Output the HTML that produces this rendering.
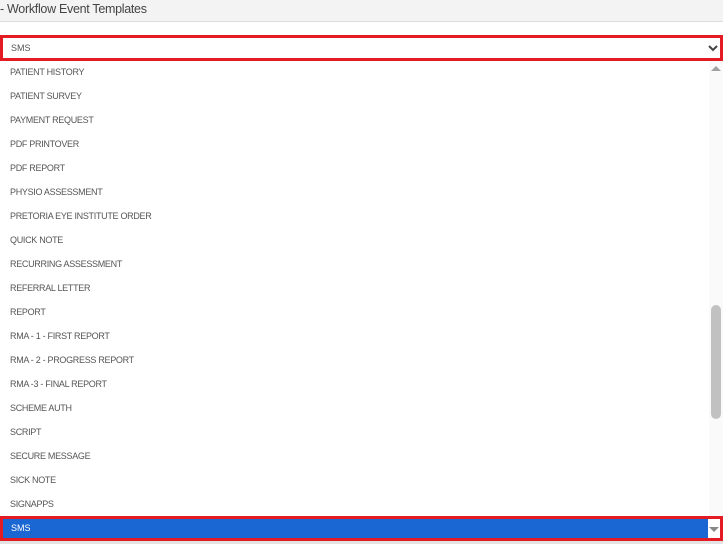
<!DOCTYPE html>
<html><head><style>
*{margin:0;padding:0;box-sizing:border-box}
body{width:723px;height:544px;overflow:hidden;background:#fff;font-family:"Liberation Sans",sans-serif;position:relative}
.hdr{position:absolute;left:0;top:0;width:723px;height:22px;background:#f3f3f3;border-bottom:1px solid #ddd;font-size:12.5px;color:#444;padding:1px 0 0 0;line-height:16px;letter-spacing:-0.3px}
.sel{position:absolute;left:0;top:35px;width:723px;height:26px;border:3px solid #e31b23;background:#fff;font-size:9px;color:#555;padding-left:8px;line-height:20px}
.chev{position:absolute;right:1px;top:4px}
.list{position:absolute;left:0;top:60px;width:709px}
.it{height:24px;line-height:24px;font-size:9px;color:#555;padding-left:10px;letter-spacing:-0.3px}
.track{position:absolute;left:709px;top:61px;width:14px;height:455px;background:#fafafa}
.thumb{position:absolute;left:711px;top:305px;width:10px;height:114px;background:#c1c1c1;border-radius:5px}
.up{position:absolute;left:711px;top:66px;width:0;height:0;border-left:5px solid transparent;border-right:5px solid transparent;border-bottom:5px solid #a0a0a0}
.last{position:absolute;left:0;top:516px;width:723px;height:25px;border:3px solid #e31b23;background:#1a66d2;color:#fff;font-size:9px;padding-left:8px;line-height:19px}
.dd{position:absolute;right:0;top:0;width:12px;height:19px;background:#fff}
.dd:after{content:"";position:absolute;left:1px;top:8px;border-left:5px solid transparent;border-right:5px solid transparent;border-top:5px solid #888}
.bot{position:absolute;left:0;top:541px;width:723px;height:3px;background:#e3e3e3}
</style></head><body>
<div class="hdr">- Workflow Event Templates</div>
<div class="sel">SMS<svg class="chev" width="12" height="12" viewBox="0 0 12 12"><path d="M2 4l4 4 4-4" fill="none" stroke="#444" stroke-width="2"/></svg></div>
<div class="list">
<div class="it">PATIENT HISTORY</div>
<div class="it">PATIENT SURVEY</div>
<div class="it">PAYMENT REQUEST</div>
<div class="it">PDF PRINTOVER</div>
<div class="it">PDF REPORT</div>
<div class="it">PHYSIO ASSESSMENT</div>
<div class="it">PRETORIA EYE INSTITUTE ORDER</div>
<div class="it">QUICK NOTE</div>
<div class="it">RECURRING ASSESSMENT</div>
<div class="it">REFERRAL LETTER</div>
<div class="it">REPORT</div>
<div class="it">RMA - 1 - FIRST REPORT</div>
<div class="it">RMA - 2 - PROGRESS REPORT</div>
<div class="it">RMA -3 - FINAL REPORT</div>
<div class="it">SCHEME AUTH</div>
<div class="it">SCRIPT</div>
<div class="it">SECURE MESSAGE</div>
<div class="it">SICK NOTE</div>
<div class="it">SIGNAPPS</div>
</div>
<div class="track"></div><div class="up"></div><div class="thumb"></div>
<div class="last">SMS<div class="dd"></div></div>
<div class="bot"></div>
</body></html>
